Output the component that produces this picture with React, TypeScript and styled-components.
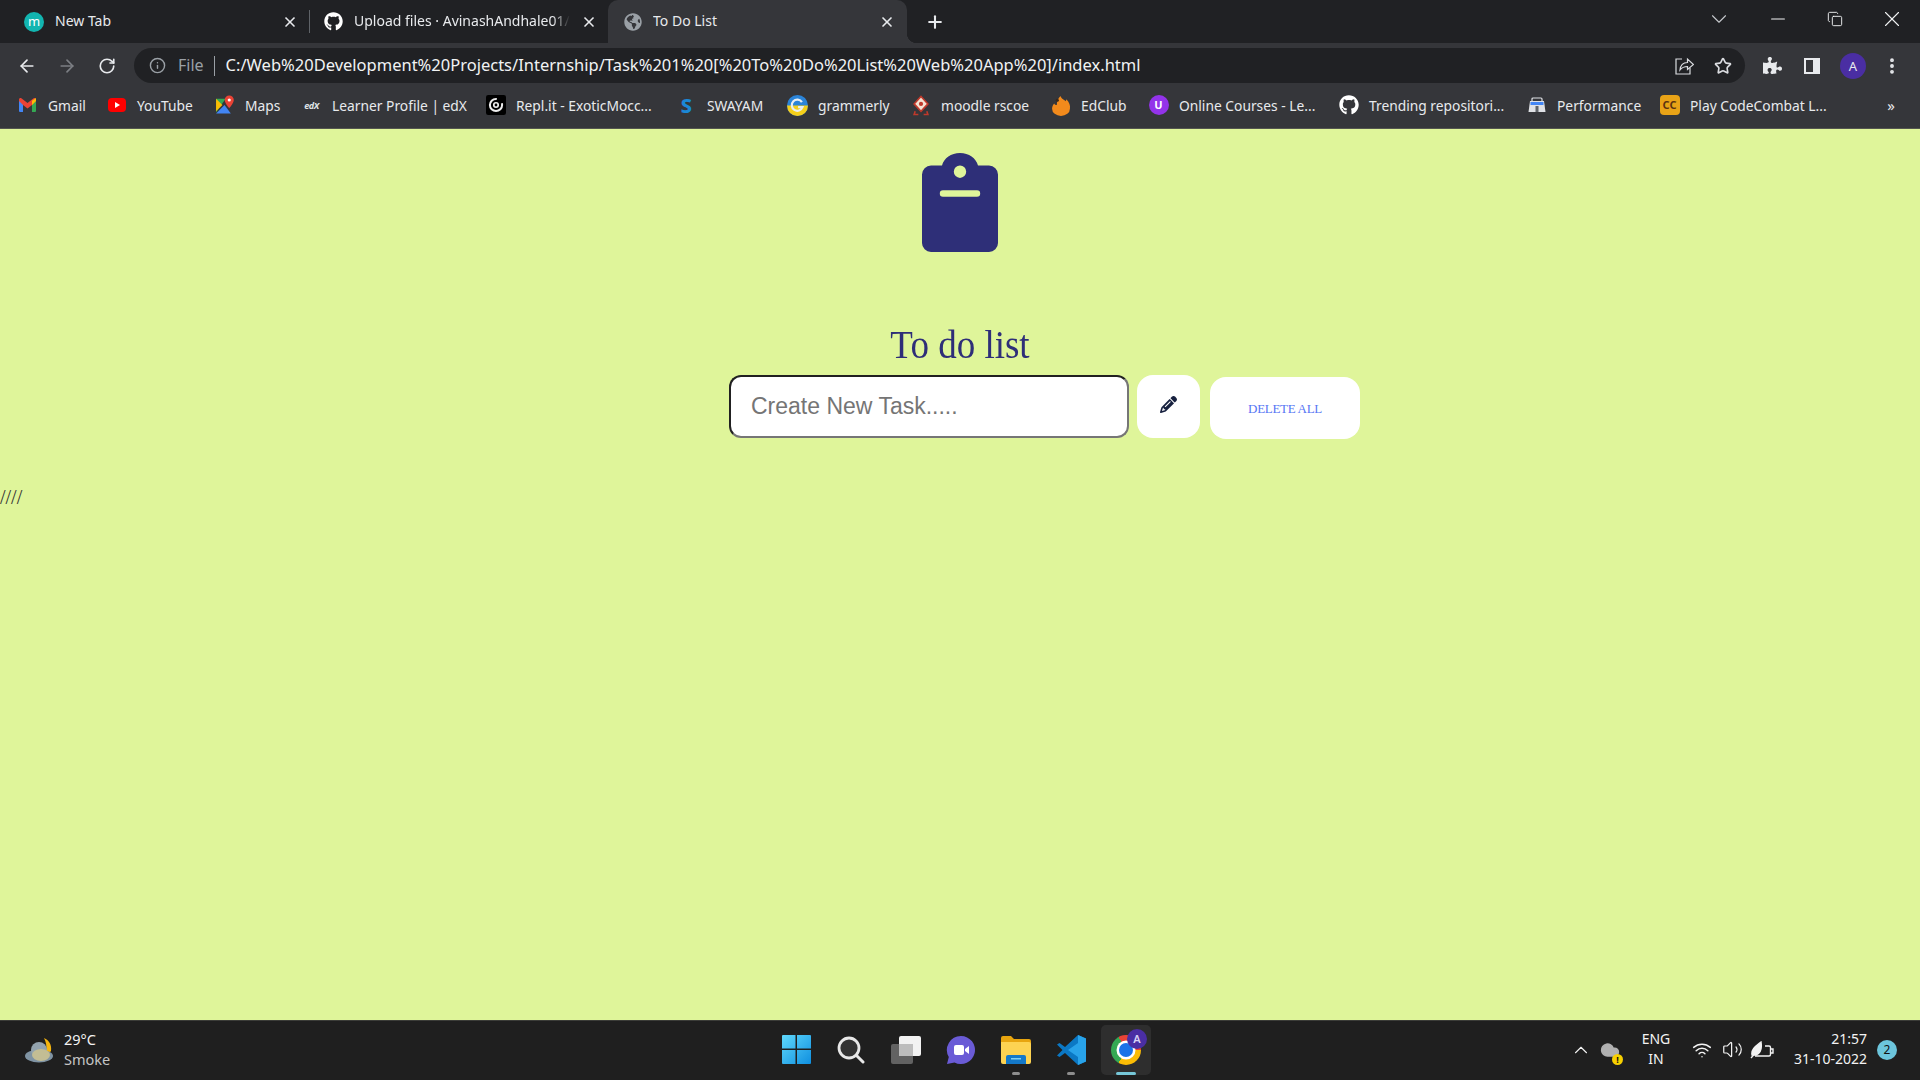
import React from "react";
import styled, { createGlobalStyle } from "styled-components";
import {
  ArrowLeft,
  ArrowRight,
  ChevronDown,
  ChevronUp,
  Cloud,
  Copy,
  Info,
  Minus,
  MoreVertical,
  Plus,
  RotateCw,
  Star,
  Volume2,
  Wifi,
  X,
} from "lucide-react";
import { FaGithub, FaGlobeAmericas, FaPuzzlePiece } from "react-icons/fa";
import { FaPencil } from "react-icons/fa6";

const GlobalStyle = createGlobalStyle`
  html, body {
    margin: 0;
    padding: 0;
    height: 100%;
    overflow: hidden;
  }
`;

const uiFont = `"Noto Sans", "Open Sans", Arial, sans-serif`;

const Screen = styled.div`
  width: 1920px;
  height: 1080px;
  display: flex;
  flex-direction: column;
  font-family: ${uiFont};
  background: #dff59a;
`;

/* browser chrome */
const TabStrip = styled.div`
  height: 43px;
  flex: none;
  display: flex;
  align-items: stretch;
  padding-left: 8px;
  background: #202124;
  color: #e8eaed;
`;

const Tab = styled.div<{ $width: number; $left: number; $right: number; $active?: boolean; $divider?: boolean }>`
  position: relative;
  width: ${(p) => p.$width}px;
  box-sizing: border-box;
  display: flex;
  align-items: center;
  gap: 11px;
  padding: 0 ${(p) => p.$right}px 0 ${(p) => p.$left}px;
  border-radius: 10px 10px 0 0;
  background: ${(p) => (p.$active ? "#35363a" : "transparent")};
  &::before {
    content: "";
    display: ${(p) => (p.$divider ? "block" : "none")};
    position: absolute;
    right: 0;
    top: 10px;
    bottom: 10px;
    width: 1px;
    background: #5f6368;
  }
  ${(p) =>
    p.$active &&
    `&::after {
      content: "";
      position: absolute;
      right: -10px;
      bottom: 0;
      width: 10px;
      height: 10px;
      background: radial-gradient(circle at 100% 0, transparent 10px, #35363a 10.5px);
    }`}
`;

const TabTitle = styled.span<{ $fade?: boolean }>`
  flex: 1;
  min-width: 0;
  margin-top: -2px;
  overflow: hidden;
  white-space: nowrap;
  font-size: 14px;
  ${(p) =>
    p.$fade &&
    `mask-image: linear-gradient(to right, #000 92%, transparent 100%);`}
`;

const MintFavicon = styled.span`
  width: 20px;
  height: 20px;
  flex: none;
  border-radius: 50%;
  background: #12b5b0;
  color: #fff;
  font-size: 13px;
  line-height: 18px;
  text-align: center;
`;

const NewTabButton = styled.div`
  width: 34px;
  margin-left: 11px;
  display: flex;
  align-items: center;
  justify-content: center;
`;

const Spacer = styled.div`
  flex: 1;
`;

const TabListButton = styled.div`
  width: 30px;
  margin-right: 15px;
  padding-bottom: 5px;
  display: flex;
  align-items: center;
  justify-content: center;
  color: #c6c9cd;
`;

const WindowButton = styled.div`
  width: 57px;
  padding-bottom: 5px;
  display: flex;
  align-items: center;
  justify-content: center;
  color: #f1f3f4;
`;

const Toolbar = styled.div`
  height: 45px;
  flex: none;
  box-sizing: border-box;
  display: flex;
  align-items: center;
  padding: 0 8px 0 7px;
  background: #35363a;
  color: #e8eaed;
`;

const ToolButton = styled.div<{ $dim?: boolean }>`
  width: 40px;
  height: 40px;
  flex: none;
  display: flex;
  align-items: center;
  justify-content: center;
  color: ${(p) => (p.$dim ? "#7c7f84" : "#e8eaed")};
`;

const Omnibox = styled.div`
  flex: 1;
  height: 35px;
  margin: 0 7px 0 7px;
  box-sizing: border-box;
  display: flex;
  align-items: center;
  padding: 0 13px 0 15px;
  border-radius: 18px;
  background: #202124;
`;

const SchemeLabel = styled.span`
  margin: -2px 0 0 12px;
  font-size: 16px;
  color: #9aa0a6;
`;

const OmniDivider = styled.span`
  width: 1px;
  height: 20px;
  margin: 0 11px 0 10px;
  background: #9aa0a6;
`;

const Url = styled.span`
  flex: 1;
  margin-top: -2px;
  font-size: 16.5px;
  white-space: nowrap;
  color: #f1f3f4;
`;

const OmniActions = styled.div`
  display: flex;
  align-items: center;
  gap: 20px;
  color: #dadce0;
`;

const Avatar = styled.span`
  width: 26px;
  height: 26px;
  margin-left: 2px;
  border-radius: 50%;
  background: #4a2ea3;
  color: #e8eaed;
  font-size: 13px;
  line-height: 26px;
  text-align: center;
`;

const BookmarksBar = styled.div`
  height: 41px;
  flex: none;
  box-sizing: border-box;
  display: flex;
  align-items: center;
  padding: 0 0 6px 19px;
  background: #35363a;
  border-bottom: 1px solid #54564f;
  color: #e8eaed;
`;

const Bookmark = styled.div<{ $width: number }>`
  width: ${(p) => p.$width}px;
  flex: none;
  display: flex;
  align-items: center;
  gap: 12px;
  font-size: 13.8px;
  white-space: nowrap;
`;

const BookmarkIcon = styled.span`
  width: 17px;
  height: 17px;
  flex: none;
  display: flex;
  align-items: center;
  justify-content: center;
  svg {
    flex: none;
  }
`;

const OverflowMark = styled.span`
  margin-left: auto;
  margin-right: 25px;
  font-size: 15px;
`;

const EdxMark = styled.span`
  font-size: 9px;
  font-style: italic;
  font-weight: 700;
  letter-spacing: -0.5px;
  color: #dfe3e6;
`;

const LetterBadge = styled.span<{ $bg: string; $fg: string; $square?: boolean }>`
  width: 20px;
  height: 20px;
  flex: none;
  box-sizing: border-box;
  border-radius: ${(p) => (p.$square ? "4px" : "50%")};
  background: ${(p) => p.$bg};
  color: ${(p) => p.$fg};
  font-size: 11px;
  font-weight: 700;
  line-height: 20px;
  text-align: center;
`;

const SwayamMark = styled.span`
  font-size: 20px;
  font-weight: 800;
  line-height: 17px;
  color: #1b87d6;
`;

/* page */
const Page = styled.main`
  flex: 1;
  min-height: 0;
  padding-top: 24px;
  background: #dff59a;
`;

const LogoRow = styled.div`
  display: flex;
  justify-content: center;
`;

const Title = styled.h1`
  margin: 69px 0 0;
  height: 54px;
  font-family: "Liberation Serif", "Times New Roman", serif;
  font-size: 40px;
  font-weight: 400;
  line-height: 48px;
  text-align: center;
  color: #2e2e78;
  transform: scaleX(0.925);
`;

const FormRow = styled.div`
  display: flex;
  align-items: flex-start;
  margin-left: 729px;
`;

const TaskInput = styled.input`
  width: 400px;
  height: 63px;
  box-sizing: border-box;
  padding: 0 20px;
  border: 2px inset #767676;
  border-radius: 12px;
  background: #fff;
  outline: none;
  font-family: "Liberation Sans", Arial, sans-serif;
  font-size: 23px;
  &::placeholder {
    color: #757575;
    opacity: 1;
  }
`;

const AddButton = styled.button`
  width: 63px;
  height: 63px;
  margin-left: 8px;
  display: flex;
  align-items: center;
  justify-content: center;
  padding: 0 0 4px;
  border: none;
  border-radius: 16px;
  background: #fff;
  color: #17213f;
`;

const DeleteButton = styled.button`
  width: 150px;
  height: 62px;
  margin: 2px 0 0 10px;
  padding: 2px 0 0;
  border: none;
  border-radius: 16px;
  background: #fff;
  font-family: "Liberation Serif", "Times New Roman", serif;
  font-size: 13px;
  letter-spacing: -0.3px;
  color: #5676f4;
`;

const Slashes = styled.div`
  margin-top: 48px;
  font-family: "Liberation Serif", "Times New Roman", serif;
  font-size: 20px;
  line-height: 20px;
  color: #333;
`;

/* windows taskbar */
const Taskbar = styled.footer`
  height: 60px;
  flex: none;
  box-sizing: border-box;
  display: grid;
  grid-template-columns: 771px auto 1fr;
  align-items: center;
  padding-bottom: 2px;
  background: #1f1f1f;
  border-top: 1px solid #3b3c38;
  color: #f3f3f3;
`;

const Weather = styled.div`
  display: flex;
  align-items: center;
  gap: 10px;
  padding-left: 24px;
`;

const WeatherText = styled.div`
  margin-top: -2px;
  font-size: 14.5px;
  line-height: 20px;
  span {
    display: block;
  }
  span + span {
    color: #c4c4c4;
  }
`;

const TaskIcons = styled.div`
  display: flex;
  gap: 5px;
`;

const TaskButton = styled.div<{ $active?: boolean }>`
  position: relative;
  width: 50px;
  height: 50px;
  display: flex;
  align-items: center;
  justify-content: center;
  border-radius: 5px;
  background: ${(p) => (p.$active ? "#2e2e2e" : "transparent")};
`;

const RunningDot = styled.span<{ $active?: boolean }>`
  position: absolute;
  left: 50%;
  bottom: 0;
  width: ${(p) => (p.$active ? 20 : 8)}px;
  height: 3px;
  transform: translateX(-50%);
  border-radius: 2px;
  background: ${(p) => (p.$active ? "#76c7d8" : "#8d8d8d")};
`;

const ChromeLogo = styled.span`
  position: relative;
  width: 30px;
  height: 30px;
  border-radius: 50%;
  background: conic-gradient(#ea4335 0 90deg, #fbbc05 90deg 210deg, #34a853 210deg 330deg, #ea4335 330deg);
  &::after {
    content: "";
    position: absolute;
    inset: 8px;
    border-radius: 50%;
    background: #1a73e8;
    box-shadow: 0 0 0 2.5px #fff;
  }
`;

const ProfileBadge = styled.span`
  position: absolute;
  top: 4px;
  right: 4px;
  width: 20px;
  height: 20px;
  border-radius: 50%;
  background: #4a2ea3;
  color: #d9d2f5;
  font-size: 11px;
  font-weight: 600;
  line-height: 20px;
  text-align: center;
`;

const Tray = styled.div`
  display: flex;
  align-items: center;
  height: 100%;
  padding-left: 418px;
  white-space: nowrap;
`;

const TrayIcon = styled.span<{ $left: number }>`
  position: relative;
  width: 24px;
  margin-left: ${(p) => p.$left}px;
  display: flex;
  align-items: center;
  justify-content: center;
  color: #f3f3f3;
`;

const WarnBadge = styled.span`
  position: absolute;
  right: -1px;
  bottom: -5px;
  width: 11px;
  height: 11px;
  border-radius: 50%;
  background: #f7d000;
  color: #111;
  font-size: 9px;
  font-weight: 700;
  line-height: 11px;
  text-align: center;
`;

const Lang = styled.div`
  width: 40px;
  margin: -2px 0 0 14px;
  font-size: 14px;
  line-height: 20px;
  text-align: center;
`;

const Clock = styled.div`
  width: 80px;
  margin: -2px 0 0 13px;
  font-size: 14px;
  line-height: 20px;
  text-align: right;
`;

const NotifyBadge = styled.span`
  width: 20px;
  height: 20px;
  margin-left: 10px;
  border-radius: 50%;
  background: #6cc5dc;
  color: #111;
  font-size: 12px;
  line-height: 20px;
  text-align: center;
`;

const ClipboardLogo = () => (
  <svg width="76" height="99" viewBox="0 0 76 99">
    <path
      fill="#2e2f78"
      fillRule="evenodd"
      d="M9 12.5H20C22 5 29 0 38 0C47 0 54 5 56 12.5H67A9 9 0 0 1 76 21.5V90A9 9 0 0 1 67 99H9A9 9 0 0 1 0 90V21.5A9 9 0 0 1 9 12.5ZM38 12.5A6.2 6.2 0 1 0 38 24.9A6.2 6.2 0 1 0 38 12.5ZM21 37.3A3.2 3.2 0 0 0 21 43.7H55A3.2 3.2 0 0 0 55 37.3Z"
    />
  </svg>
);

const GmailIcon = () => (
  <svg width="17" height="14" viewBox="0 0 17 14">
    <path fill="#4285f4" d="M0 2v11a1 1 0 0 0 1 1h3V5z" />
    <path fill="#34a853" d="M17 2v11a1 1 0 0 1-1 1h-3V5z" />
    <path fill="#ea4335" d="M4 7 0 3V1.500C0 0 1.700-.5 2.700.4L8.500 5 14.300.4C15.300-.5 17 0 17 1.500V3l-4 4-4.500 3.400z" />
    <path fill="#fbbc04" d="M13 2.800 17 0v3l-4 4z" />
  </svg>
);

const YoutubeIcon = () => (
  <svg width="18" height="14" viewBox="0 0 18 14">
    <rect width="18" height="14" rx="4" fill="#f00" />
    <path d="M7 4v6l5-3z" fill="#fff" />
  </svg>
);

const MapsIcon = () => (
  <svg width="19" height="20" viewBox="0 0 18 18">
    <path fill="#34a853" d="M1 3h9L1 16z" />
    <path fill="#4285f4" d="M1 17 9 9l6 8z" />
    <path fill="#fbbc04" d="M1 3l6 6-6 6z" />
    <path fill="#ea4335" d="M13.500 0a4.300 4.300 0 0 0-4.300 4.300c0 3 4.300 7.700 4.300 7.700s4.300-4.700 4.300-7.700A4.300 4.300 0 0 0 13.500 0z" />
    <circle cx="13.500" cy="4.300" r="1.500" fill="#fff" />
  </svg>
);

const ReplIcon = () => (
  <svg width="20" height="20" viewBox="0 0 18 18">
    <rect width="18" height="18" rx="2" fill="#000" />
    <circle cx="9" cy="9" r="5.500" fill="none" stroke="#eee" strokeWidth="1.800" strokeDasharray="26 6" />
    <circle cx="9" cy="9" r="2" fill="none" stroke="#eee" strokeWidth="1.500" />
  </svg>
);

const GrammarlyIcon = () => (
  <svg width="21" height="21" viewBox="0 0 19 19">
    <circle cx="9.500" cy="9.500" r="9.500" fill="#2b84d8" />
    <path d="M0 9.500h19a9.500 9.500 0 0 1-19 0z" fill="#f5cf1a" />
    <path d="M13.500 6.500A5 5 0 1 0 14 11H10" fill="none" stroke="#e9eef2" strokeWidth="2" />
  </svg>
);

const MoodleIcon = () => (
  <svg width="18" height="21" viewBox="0 0 17 19">
    <path d="M8.500 1 15 8l-6.500 7L2 8z" fill="#f3e3d3" stroke="#c0392b" strokeWidth="1.500" />
    <circle cx="8.500" cy="8" r="2" fill="#c0392b" />
    <path d="M3 15l-1 3h4M14 15l1 3h-4" fill="none" stroke="#c0392b" strokeWidth="1.500" />
  </svg>
);

const EdClubIcon = () => (
  <svg width="20" height="21" viewBox="0 0 19 20">
    <path fill="#f28a1c" d="M9 1c1 3 3 3 5 5 .5-1 .5-2 .5-2 3 3 4 6 3.500 9a8.500 7 0 0 1-17 0c0-2 1-4 2-5 .5 1 1.500 1.500 2.500 1.500C5.500 6 7 3 9 1z" />
    <circle cx="6" cy="5" r="1.500" fill="#3b2a1a" />
  </svg>
);

const PerformanceIcon = () => (
  <svg width="18" height="16" viewBox="0 0 18 16">
    <path fill="#dfe1e5" d="M2 4h14l1.500 11h-17z" />
    <rect x="4" y="1" width="10" height="4" rx="1" fill="none" stroke="#dfe1e5" strokeWidth="1.200" />
    <rect x="2.500" y="5" width="13" height="3" fill="#4285f4" />
    <rect x="7.500" y="9" width="3" height="6" fill="#5f6368" />
  </svg>
);

const SidePanelIcon = () => (
  <svg width="18" height="18" viewBox="0 0 18 18">
    <path fill="#e8eaed" fillRule="evenodd" d="M1 1h16v16H1zM3 3v12h7V3z" />
  </svg>
);

const ShareIcon = () => (
  <svg width="20" height="20" viewBox="0 0 20 20" fill="none" stroke="#dadce0" strokeWidth="1.200">
    <path d="M8 3H2v15h14v-6" />
    <path d="M6 14c.5-5 3.500-7.500 7.500-7.500V3l6 5.500-6 5V10.500C10 10.500 8 11.500 6 14z" />
  </svg>
);

const WeatherIcon = () => (
  <svg width="30" height="26" viewBox="0 0 30 26">
    <path fill="#f5b50f" d="M20 1c5 2 8 7 7 13-1 2-4 1-5 0 1-5 0-9-2-13z" />
    <ellipse cx="15" cy="19" rx="14" ry="6.500" fill="#7f93a3" />
    <circle cx="15" cy="13" r="8" fill="#93a3ae" />
    <ellipse cx="17" cy="18" rx="9" ry="6" fill="#c3bd94" />
  </svg>
);

const WindowsLogo = () => (
  <svg width="29" height="29" viewBox="0 0 29 29">
    <defs>
      <linearGradient id="winBlue" x1="0" y1="0" x2="1" y2="1">
        <stop offset="0" stopColor="#5fd8fb" />
        <stop offset="1" stopColor="#0f8fe0" />
      </linearGradient>
    </defs>
    <path
      fill="url(#winBlue)"
      d="M1 0h12.500v13.500H0V1a1 1 0 0 1 1-1zM15 0h13a1 1 0 0 1 1 1v12.500H15zM0 15h13.500v14H1a1 1 0 0 1-1-1zM15 15h14v13a1 1 0 0 1-1 1H15z"
    />
  </svg>
);

const SearchLogo = () => (
  <svg width="28" height="28" viewBox="0 0 28 28">
    <circle cx="12" cy="12" r="10" fill="#333" stroke="#e8e8e8" strokeWidth="2.800" />
    <path d="M19.500 19.500 26 26" stroke="#e8e8e8" strokeWidth="3" strokeLinecap="round" />
  </svg>
);

const TaskViewLogo = () => (
  <svg width="30" height="28" viewBox="0 0 30 28">
    <rect x="8" y="0" width="22" height="20" rx="2" fill="#f2f2f2" />
    <rect x="0" y="8" width="22" height="20" rx="2" fill="#6e6e6e" fillOpacity="0.85" />
    <rect x="8" y="8" width="14" height="12" fill="#bdbdbd" />
  </svg>
);

const ChatLogo = () => (
  <svg width="30" height="30" viewBox="0 0 30 30">
    <path fill="#6a5bd6" d="M15 1a14 14 0 1 1-6.500 26.400L1 29l1.800-7A14 14 0 0 1 15 1z" />
    <rect x="8" y="10" width="10" height="10" rx="2" fill="#fff" />
    <path d="M19 14l4-3v8l-4-3z" fill="#fff" />
  </svg>
);

const ExplorerLogo = () => (
  <svg width="30" height="28" viewBox="0 0 30 28">
    <path fill="#e8a50f" d="M0 2a2 2 0 0 1 2-2h8l3 3h15a2 2 0 0 1 2 2v4H0z" />
    <path fill="#fdd352" d="M0 6h28a2 2 0 0 1 2 2v18a2 2 0 0 1-2 2H2a2 2 0 0 1-2-2z" />
    <path fill="#1479c9" d="M5 21a2 2 0 0 1 2-2h16a2 2 0 0 1 2 2v7H5z" />
    <rect x="10" y="22" width="10" height="1.500" fill="#7fd0f5" />
  </svg>
);

const VsCodeLogo = () => (
  <svg width="30" height="30" viewBox="0 0 30 30">
    <path fill="#0b78c4" d="M22 0 9 12 3.500 8 1 9.500 6.500 15 1 20.500 3.500 22 9 18l13 12 8-3.500V3.500z" />
    <path fill="#28a3ea" d="M22 0l8 3.500v23L22 30zM22 8 12 15l10 7z" />
  </svg>
);

const BatterySaver = () => (
  <svg width="24" height="18" viewBox="0 0 24 18" fill="none" stroke="#f3f3f3" strokeWidth="1.400">
    <path d="M5 15h14a1.500 1.500 0 0 0 1.500-1.500v-7A1.500 1.500 0 0 0 19 5h-4" />
    <path d="M20.500 8H23v4h-2.500" />
    <path fill="#f3f3f3" d="M2 14C1 8 6 5 11 1c1 6 0 11-5 13z" />
    <path d="M1 17 8 9" />
  </svg>
);

const bookmarks: { label: string; width: number; icon: React.ReactNode }[] = [
  { label: "Gmail", width: 89, icon: <GmailIcon /> },
  { label: "YouTube", width: 108, icon: <YoutubeIcon /> },
  { label: "Maps", width: 87, icon: <MapsIcon /> },
  { label: "Learner Profile | edX", width: 184, icon: <EdxMark>edX</EdxMark> },
  { label: "Repl.it - ExoticMocc...", width: 191, icon: <ReplIcon /> },
  { label: "SWAYAM", width: 111, icon: <SwayamMark>S</SwayamMark> },
  { label: "grammerly", width: 123, icon: <GrammarlyIcon /> },
  { label: "moodle rscoe", width: 140, icon: <MoodleIcon /> },
  { label: "EdClub", width: 98, icon: <EdClubIcon /> },
  {
    label: "Online Courses - Le...",
    width: 190,
    icon: <LetterBadge $bg="#9333ea" $fg="#fff">U</LetterBadge>,
  },
  { label: "Trending repositori...", width: 188, icon: <FaGithub size={20} color="#fff" /> },
  { label: "Performance", width: 133, icon: <PerformanceIcon /> },
  {
    label: "Play CodeCombat L...",
    width: 200,
    icon: <LetterBadge $bg="#e8a317" $fg="#5a3310" $square>CC</LetterBadge>,
  },
];

const App = () => {
  return (
    <Screen>
      <GlobalStyle />

      <TabStrip>
        <Tab $width={302} $left={16} $right={12} $divider>
          <MintFavicon>m</MintFavicon>
          <TabTitle>New Tab</TabTitle>
          <X size={16} strokeWidth={2.5} />
        </Tab>
        <Tab $width={298} $left={14} $right={11}>
          <FaGithub size={19} color="#fff" />
          <TabTitle $fade>Upload files · AvinashAndhale01/</TabTitle>
          <X size={16} strokeWidth={2.5} />
        </Tab>
        <Tab $width={299} $left={16} $right={12} $active>
          <FaGlobeAmericas size={18} color="#9aa0a6" />
          <TabTitle>To Do List</TabTitle>
          <X size={16} strokeWidth={2.5} />
        </Tab>
        <NewTabButton>
          <Plus size={20} strokeWidth={2.5} />
        </NewTabButton>
        <Spacer />
        <TabListButton>
          <ChevronDown size={26} strokeWidth={1} />
        </TabListButton>
        <WindowButton>
          <Minus size={22} strokeWidth={1.1} />
        </WindowButton>
        <WindowButton>
          <Copy size={16} strokeWidth={1.4} />
        </WindowButton>
        <WindowButton>
          <X size={26} strokeWidth={1} />
        </WindowButton>
      </TabStrip>

      <Toolbar>
        <ToolButton>
          <ArrowLeft size={20} strokeWidth={2} />
        </ToolButton>
        <ToolButton $dim>
          <ArrowRight size={20} strokeWidth={2} />
        </ToolButton>
        <ToolButton>
          <RotateCw size={18} strokeWidth={2.2} />
        </ToolButton>
        <Omnibox>
          <Info size={17} color="#9aa0a6" />
          <SchemeLabel>File</SchemeLabel>
          <OmniDivider />
          <Url>C:/Web%20Development%20Projects/Internship/Task%201%20[%20To%20Do%20List%20Web%20App%20]/index.html</Url>
          <OmniActions>
            <ShareIcon />
            <Star size={18} strokeWidth={2.2} />
          </OmniActions>
        </Omnibox>
        <ToolButton>
          <FaPuzzlePiece size={19} />
        </ToolButton>
        <ToolButton>
          <SidePanelIcon />
        </ToolButton>
        <ToolButton>
          <Avatar>A</Avatar>
        </ToolButton>
        <ToolButton>
          <MoreVertical size={20} strokeWidth={2.6} />
        </ToolButton>
      </Toolbar>

      <BookmarksBar>
        {bookmarks.map((b) => (
          <Bookmark key={b.label} $width={b.width}>
            <BookmarkIcon>{b.icon}</BookmarkIcon>
            {b.label}
          </Bookmark>
        ))}
        <OverflowMark>»</OverflowMark>
      </BookmarksBar>

      <Page>
        <LogoRow>
          <ClipboardLogo />
        </LogoRow>
        <Title>To do list</Title>
        <FormRow>
          <TaskInput placeholder="Create New Task....." />
          <AddButton>
            <FaPencil size={17} />
          </AddButton>
          <DeleteButton>DELETE ALL</DeleteButton>
        </FormRow>
        <Slashes>////</Slashes>
      </Page>

      <Taskbar>
        <Weather>
          <WeatherIcon />
          <WeatherText>
            <span>29°C</span>
            <span>Smoke</span>
          </WeatherText>
        </Weather>
        <TaskIcons>
          <TaskButton>
            <WindowsLogo />
          </TaskButton>
          <TaskButton>
            <SearchLogo />
          </TaskButton>
          <TaskButton>
            <TaskViewLogo />
          </TaskButton>
          <TaskButton>
            <ChatLogo />
          </TaskButton>
          <TaskButton>
            <ExplorerLogo />
            <RunningDot />
          </TaskButton>
          <TaskButton>
            <VsCodeLogo />
            <RunningDot />
          </TaskButton>
          <TaskButton $active>
            <ChromeLogo />
            <ProfileBadge>A</ProfileBadge>
            <RunningDot $active />
          </TaskButton>
        </TaskIcons>
        <Tray>
          <TrayIcon $left={0}>
            <ChevronUp size={22} strokeWidth={1.2} />
          </TrayIcon>
          <TrayIcon $left={5}>
            <Cloud size={20} fill="#b0b0b0" color="#b0b0b0" />
            <WarnBadge>!</WarnBadge>
          </TrayIcon>
          <Lang>
            ENG
            <br />
            IN
          </Lang>
          <TrayIcon $left={14}>
            <Wifi size={20} strokeWidth={1.8} />
          </TrayIcon>
          <TrayIcon $left={6}>
            <Volume2 size={21} strokeWidth={1.4} />
          </TrayIcon>
          <TrayIcon $left={6}>
            <BatterySaver />
          </TrayIcon>
          <Clock>
            21:57
            <br />
            31-10-2022
          </Clock>
          <NotifyBadge>2</NotifyBadge>
        </Tray>
      </Taskbar>
    </Screen>
  );
};

export default App;
